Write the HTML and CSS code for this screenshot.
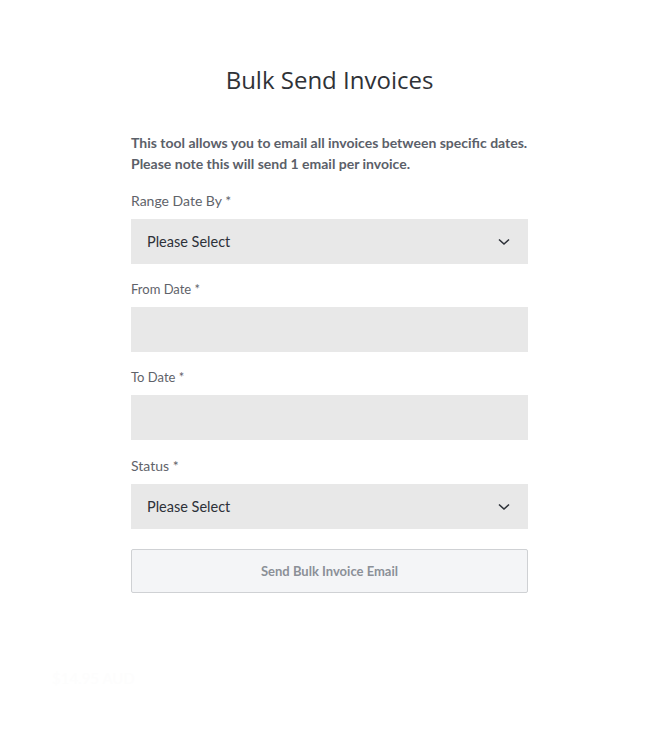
FILE: index.html
```html
<!DOCTYPE html>
<html lang="en">
  <head>
    <meta charset="UTF-8" />
    <meta name="viewport" content="width=device-width, initial-scale=1.0" />
    <title>Bulk Send Invoices</title>
    <link rel="stylesheet" href="styles.css">
  </head>
  <body>
    <div class="container">
      <h1>Bulk Send Invoices</h1>
      <form id="bulkForm">
        <p class="intro">
          This tool allows you to email all invoices between specific dates.<br />
          Please note this will send 1 email per invoice.
        </p>

        <label for="range">Range Date By *</label>
        <div class="select">
          <span>Please Select</span>
          <svg width="12" height="8" viewBox="0 0 12 8">
            <path d="M1 1.5 L6 6 L11 1.5" fill="none" stroke="#2d3138" stroke-width="1.6" />
          </svg>
        </div>

        <label for="from" class="small">From Date *</label>
        <input type="text" id="from" name="from" />

        <label for="to" class="small">To Date *</label>
        <input type="text" id="to" name="to" />

        <label for="status" class="status">Status *</label>
        <div class="select">
          <span>Please Select</span>
          <svg width="12" height="8" viewBox="0 0 12 8">
            <path d="M1 1.5 L6 6 L11 1.5" fill="none" stroke="#2d3138" stroke-width="1.6" />
          </svg>
        </div>

        <button type="button">Send Bulk Invoice Email</button>
      </form>
    </div>
    <p class="price">$14.95 AUD</p>
  </body>
</html>
```

FILE: styles.css
```css
* {
  margin: 0;
  padding: 0;
  box-sizing: border-box;
}
body {
  font-family: Lato, "Open Sans", sans-serif;
  background: #fff;
  color: #2d3138;
  min-height: 100vh;
  padding-right: 8px;
}

.container {
  width: 397px;
  margin: 0 auto;
  padding-top: 64px;
}
h1 {
  text-align: center;
  font-family: "Open Sans", sans-serif;
  font-weight: 400;
  font-size: 24px;
  line-height: 32px;
  color: #2f3237;
  margin-bottom: 36px;
}

form {
  display: flex;
  flex-direction: column;
}

.intro {
  font-size: 14px;
  font-weight: 700;
  line-height: 21px;
  color: #5b6069;
  margin-bottom: 17px;
  white-space: nowrap;
}

label {
  font-size: 14px;
  line-height: 20px;
  color: #5f636a;
  margin-bottom: 8px;
}
label.small {
  font-size: 13px;
}
label.status {
  margin-top: 1px;
}

.select,
input[type="text"] {
  height: 45px;
  background-color: #e8e8e8;
  border: none;
  margin-bottom: 15px;
}
.select {
  display: flex;
  align-items: center;
  justify-content: space-between;
  padding: 0 18px 0 16px;
  font-size: 14.5px;
  color: #2d3138;
}

button {
  margin-top: 5px;
  height: 44px;
  background-color: #f4f5f7;
  border: 1px solid #cfd1d4;
  border-radius: 2px;
  font-family: inherit;
  font-size: 13px;
  font-weight: 700;
  color: #8b9097;
}

.price {
  margin: 76px 0 0 52px;
  font-size: 15px;
  color: #fdfdfd;
}
```
